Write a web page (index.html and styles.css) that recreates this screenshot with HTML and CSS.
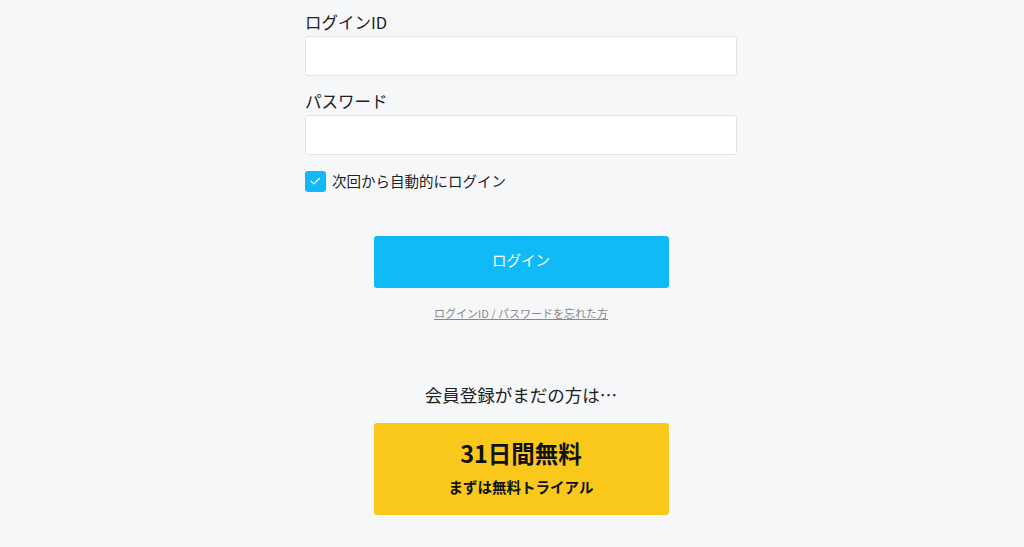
FILE: index.html
```html
<!DOCTYPE html>
<html lang="ja">
<head>
<meta charset="utf-8">
<title>ログイン</title>
<link rel="stylesheet" href="styles.css">
</head>
<body>
<main class="page">
  <form class="login">
    <label class="label" for="lid">ログインID</label>
    <input class="field" id="lid" type="text">
    <label class="label label-2" for="pw">パスワード</label>
    <input class="field" id="pw" type="password">
    <div class="remember">
      <span class="check">
        <svg viewBox="0 0 22 22" width="22" height="22"><path d="M6.5 11.4 L9.4 14 L15 8.4" fill="none" stroke="#fff" stroke-width="1.3" stroke-linecap="round" stroke-linejoin="round"/></svg>
      </span>
      <span class="remember-text">次回から自動的にログイン</span>
    </div>
    <div class="actions">
      <button type="button" class="btn-login">ログイン</button>
      <a class="forgot" href="#">ログインID / パスワードを忘れた方</a>
    </div>
  </form>
  <section class="signup">
    <p class="signup-lead">会員登録がまだの方は…</p>
    <a class="btn-trial" href="#">
      <span class="trial-title">31日間無料</span>
      <span class="trial-sub">まずは無料トライアル</span>
    </a>
  </section>
</main>
</body>
</html>
```

FILE: styles.css
```css
html, body {
  margin: 0;
  padding: 0;
  background: #f6f7f9;
  font-family: "Noto Sans CJK JP", "Noto Sans", sans-serif;
  color: #222;
}
.page {
  width: 432px;
  margin-left: calc(50% - 207px);
  padding-top: 10px;
  display: flex;
  flex-direction: column;
}
.login {
  display: flex;
  flex-direction: column;
}
.label {
  font-size: 16.5px;
  line-height: 24px;
  margin-bottom: 2px;
  color: #222;
}
.label-2 {
  margin-top: 13px;
}
.field {
  box-sizing: border-box;
  height: 40px;
  width: 100%;
  border: 1px solid #e2e3e5;
  border-radius: 3px;
  background: #fff;
  margin: 0;
  padding: 0 10px;
  font-size: 16px;
}
.remember {
  margin-top: 15px;
  display: flex;
  align-items: center;
  gap: 6px;
  height: 22px;
}
.check {
  width: 21px;
  height: 21px;
  border-radius: 3px;
  background: #12b9f6;
  display: flex;
  align-items: center;
  justify-content: center;
  overflow: hidden;
}
.remember-text {
  font-size: 14.5px;
  line-height: 22px;
  color: #222;
}
.actions {
  display: flex;
  flex-direction: column;
  align-items: center;
  margin-top: 44px;
}
.btn-login {
  width: 295px;
  height: 52px;
  border: none;
  border-radius: 3px;
  background: #10baf7;
  color: #fff;
  font-family: inherit;
  font-size: 14.5px;
  padding: 0 0 5px;
  cursor: pointer;
}
.forgot {
  margin-top: 17px;
  font-size: 11px;
  line-height: 16px;
  color: #888;
  text-decoration: underline;
}
.signup {
  display: flex;
  flex-direction: column;
  align-items: center;
}
.signup-lead {
  margin: 62px 0 0;
  font-size: 17.5px;
  line-height: 24px;
  color: #222;
}
.btn-trial {
  margin-top: 16px;
  box-sizing: border-box;
  width: 295px;
  height: 92px;
  border-radius: 3px;
  background: #f9c81b;
  color: #111;
  text-decoration: none;
  display: flex;
  flex-direction: column;
  align-items: center;
  padding-top: 15px;
}
.trial-title {
  font-size: 23.5px;
  line-height: 30px;
  font-weight: 700;
}
.trial-sub {
  margin-top: 9px;
  font-size: 14.5px;
  line-height: 20px;
  font-weight: 700;
}
```
